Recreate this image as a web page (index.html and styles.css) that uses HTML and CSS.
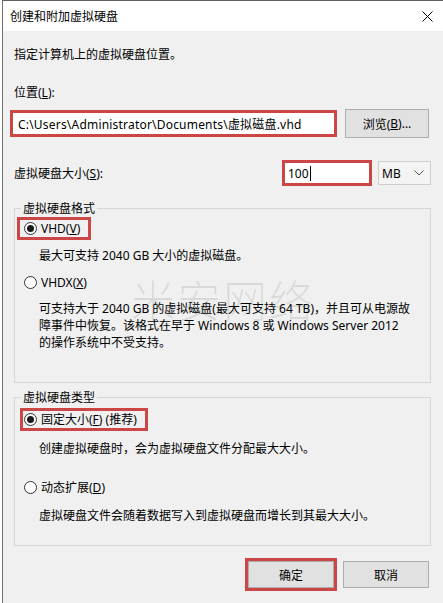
FILE: index.html
```html
<!DOCTYPE html>
<html lang="zh-CN">
<head>
<meta charset="utf-8">
<title>创建和附加虚拟硬盘</title>
<link rel="stylesheet" href="styles.css">
</head>
<body>
<div class="window">
  <div class="titlebar">
    <span class="title">创建和附加虚拟硬盘</span>
    <svg class="close" width="11" height="11" viewBox="0 0 11 11"><path d="M0.5 0.5 L10.5 10.5 M10.5 0.5 L0.5 10.5" stroke="#000" stroke-width="1" fill="none"/></svg>
  </div>
  <div class="content">
    <p class="intro">指定计算机上的虚拟硬盘位置。</p>
    <p class="label">位置(<u>L</u>):</p>
    <div class="loc-row">
      <div class="field hl loc">C:\Users\Administrator\Documents\虚拟磁盘.vhd</div>
      <div class="btn browse">浏览(<u>B</u>)...</div>
    </div>
    <div class="size-row">
      <span class="size-label">虚拟硬盘大小(<u>S</u>):</span>
      <div class="field hl size">100<span class="caret"></span></div>
      <div class="combo"><span>MB</span><svg width="10" height="6" viewBox="0 0 10 6"><path d="M0.5 0.5 L5 5 L9.5 0.5" stroke="#555" stroke-width="1" fill="none"/></svg></div>
    </div>

    <fieldset class="group g-format">
      <legend>虚拟硬盘格式</legend>
      <div class="radio hl-radio r-vhd"><span class="dot on"></span><span>VHD(<u>V</u>)</span></div>
      <p class="desc d1">最大可支持 2040 GB 大小的虚拟磁盘。</p>
      <div class="radio r-vhdx"><span class="dot"></span><span>VHDX(<u>X</u>)</span></div>
      <p class="desc d2">可支持大于 2040 GB 的虚拟磁盘(最大可支持 64 TB)，并且可从电源故<br>障事件中恢复。该格式在早于 Windows 8 或 Windows Server 2012<br>的操作系统中不受支持。</p>
    </fieldset>

    <fieldset class="group g-type">
      <legend>虚拟硬盘类型</legend>
      <div class="radio hl-radio r-fixed"><span class="dot on"></span><span>固定大小(<u>F</u>) (推荐)</span></div>
      <p class="desc d3">创建虚拟硬盘时，会为虚拟硬盘文件分配最大大小。</p>
      <div class="radio r-dyn"><span class="dot"></span><span>动态扩展(<u>D</u>)</span></div>
      <p class="desc d4">虚拟硬盘文件会随着数据写入到虚拟硬盘而增长到其最大大小。</p>
    </fieldset>

    <div class="buttons">
      <div class="btn dlg ok">确定</div>
      <div class="btn dlg">取消</div>
    </div>
  </div>
  <div class="watermark">米安网络</div>
</div>
</body>
</html>
```

FILE: styles.css
```css
* { box-sizing: border-box; }
html, body { margin: 0; padding: 0; }
body {
  width: 443px;
  height: 603px;
  overflow: hidden;
  background: #ffffff;
  font-family: "Noto Sans", "Noto Sans CJK SC", sans-serif;
  font-size: 12px;
  color: #000;
}
u { text-decoration: underline; text-underline-offset: 1px; }
.window {
  position: relative;
  margin-left: 2px;
  height: 603px;
  border-left: 1px solid #6e6e6e;
  border-top: 1px solid #5f5f5f;
  background: #f0f0f0;
}
.titlebar {
  height: 30px;
  background: #fff;
  display: flex;
  align-items: center;
  justify-content: space-between;
  padding: 0 10px 0 7px;
}
.title { line-height: 17px; }
.close { display: block; }
.content {
  padding: 15px 12px 0 11px;
}
p { margin: 0; line-height: 17px; }
.label { margin-top: 21px; }
.loc-row {
  margin-top: 8px;
  display: flex;
  align-items: center;
  justify-content: space-between;
  height: 29px;
}
.field {
  background: #fff;
  display: flex;
  align-items: center;
  white-space: nowrap;
}
.hl { border: 3px solid #cc4646; }
.loc {
  margin-left: -4px;
  width: 327px;
  height: 27px;
  padding-left: 5px;
  letter-spacing: 0.2px;
}
.btn {
  background: #e1e1e1;
  border: 1px solid #adadad;
  display: flex;
  align-items: center;
  justify-content: center;
}
.browse {
  width: 84px;
  height: 29px;
  margin-right: 2px;
}
.size-row {
  margin-top: 22px;
  display: flex;
  align-items: center;
  height: 26px;
}
.size-label { flex: 1; }
.size {
  width: 90px;
  height: 26px;
  padding-left: 3px;
}
.caret {
  display: inline-block;
  width: 1px;
  height: 15px;
  background: #000;
  margin-left: 1px;
}
.combo {
  margin-left: 6px;
  width: 53px;
  height: 24px;
  background: #f4f4f4;
  border: 1px solid #cfcfcf;
  display: flex;
  align-items: center;
  justify-content: space-between;
  padding: 0 6px 0 3px;
}
.combo svg { display: block; }

.group {
  margin: 0;
  border: 1px solid #d6d6d6;
  padding: 0 2px;
  min-inline-size: 0;
}
.group legend {
  padding: 0 2px;
  margin-left: 4px;
  line-height: 17px;
}
.g-format { margin-top: 14px; padding-bottom: 31px; }
.g-type { margin-top: 6px; padding-bottom: 21px; }

.radio {
  display: flex;
  align-items: center;
  width: max-content;
  height: 23px;
  border: 3px solid transparent;
  padding: 0 6px 0 4px;
  line-height: 17px;
}
.hl-radio { border-color: #cc4646; }
.dot {
  width: 13px;
  height: 13px;
  border: 1px solid #333;
  border-radius: 50%;
  background: #fff;
  margin-right: 4px;
  display: flex;
  align-items: center;
  justify-content: center;
}
.dot.on::after {
  content: "";
  width: 7px;
  height: 7px;
  border-radius: 50%;
  background: #1a1a1a;
}
.r-vhd { padding-right: 8px; }
.r-fixed { margin-left: 3px; padding-left: 1px; padding-right: 8px; }
.desc { margin-left: 22px; white-space: nowrap; }
.d1 { margin-top: 7px; }
.r-vhdx { margin-top: 7px; }
.d2 { margin-top: 6px; }
.r-fixed { margin-top: 2px; }
.d3 { margin-top: 9px; }
.r-dyn { margin-top: 19px; }
.d4 { margin-top: 8px; }

.buttons {
  margin-top: 15px;
  display: flex;
  justify-content: flex-end;
  gap: 9px;
  padding-right: 2px;
}
.dlg {
  width: 86px;
  height: 27px;
}
.ok { outline: 3px solid #cc4646; }

.watermark {
  position: absolute;
  left: 128px;
  top: 273px;
  font-family: "Noto Sans CJK SC", sans-serif;
  font-weight: 300;
  font-size: 44px;
  line-height: 50px;
  color: rgba(0, 0, 0, 0.09);
  letter-spacing: 2px;
  pointer-events: none;
}
```
